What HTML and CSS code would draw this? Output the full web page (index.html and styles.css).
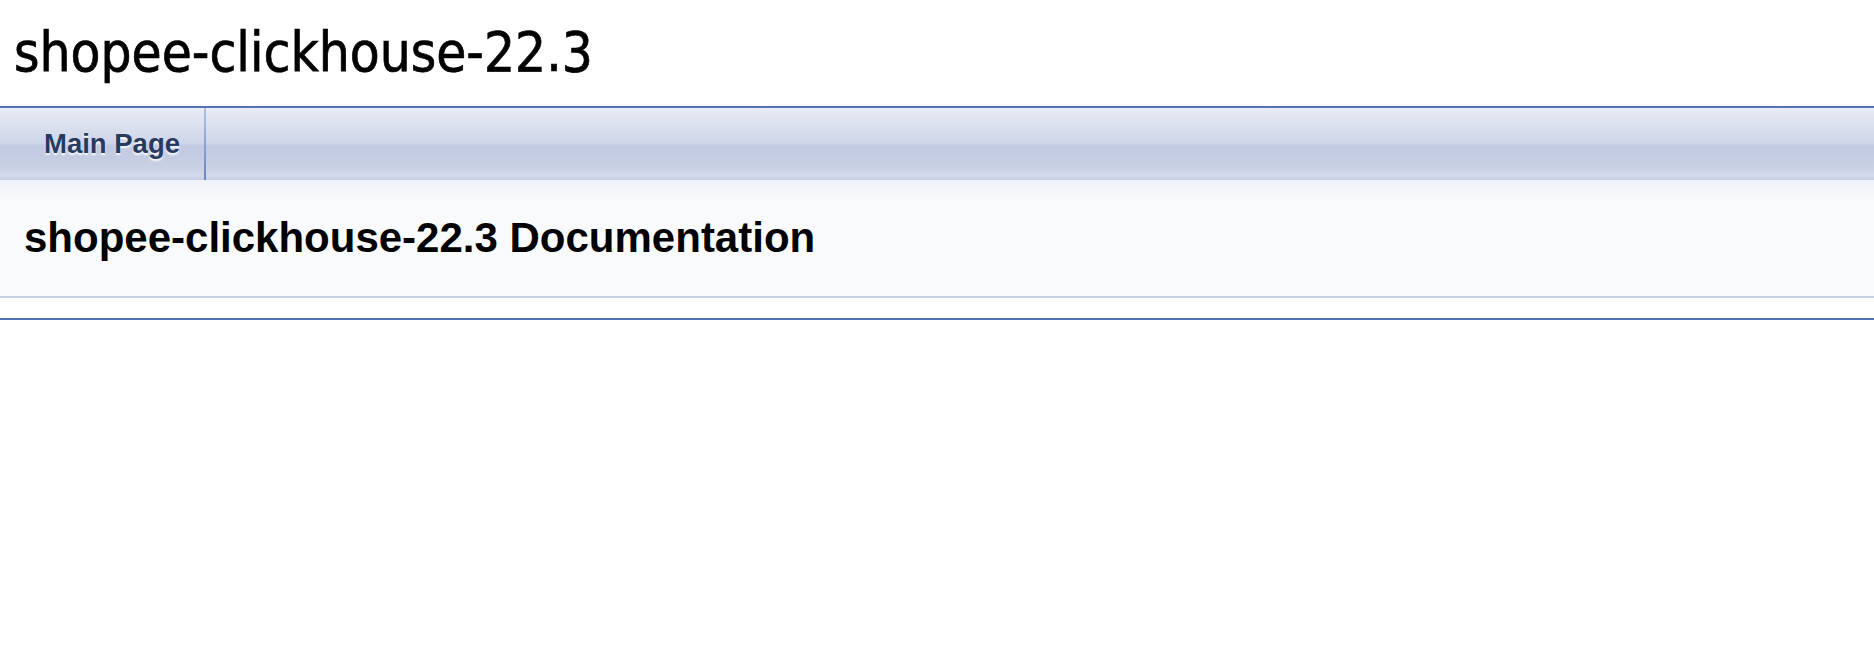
FILE: index.html
```html
<!DOCTYPE html>
<html>
<head>
<meta charset="utf-8">
<title>shopee-clickhouse-22.3: Main Page</title>
<link rel="stylesheet" href="styles.css">
</head>
<body>
<div class="titlearea">
  <div class="projectname">shopee-clickhouse-22.3</div>
</div>
<div class="navrow">
  <ul class="tablist">
    <li class="tab"><a class="tab-link" href="#">Main Page</a></li>
  </ul>
</div>
<div class="header">
  <div class="headertitle">
    <div class="title">shopee-clickhouse-22.3 Documentation</div>
  </div>
</div>
<hr class="footer">
</body>
</html>
```
FILE: styles.css
```css
html, body {
  margin: 0;
  padding: 0;
  background: #ffffff;
}

body {
  font-family: "Liberation Sans", Arial, sans-serif;
  color: #000000;
}

.titlearea {
  height: 106px;
  box-sizing: content-box;
  border-bottom: 2px solid #5373B4;
  padding: 0 0 0 14px;
}

.projectname {
  font-family: "DejaVu Sans Condensed", "DejaVu Sans", sans-serif;
  font-stretch: condensed;
  font-size: 54.4px;
  line-height: 64px;
  padding-top: 21px;
  -webkit-text-stroke: 0.7px #000000;
  color: #000000;
}

.navrow {
  height: 72px;
  background: linear-gradient(to bottom,
    #e9ecf5 0px,
    #e2e6f1 8px,
    #d3d9ea 30px,
    #cdd4e7 36px,
    #c1cae1 37px,
    #c3cce2 50px,
    #cbd2e6 62px,
    #d3d9ea 68px,
    #c6cee3 72px);
}

.tablist {
  list-style: none;
  margin: 0;
  padding: 0;
  display: flex;
  height: 72px;
}

.tab {
  display: flex;
}

.tab-link {
  display: block;
  height: 72px;
  line-height: 72px;
  padding: 0 26px 0 44px;
  font-family: "Liberation Sans", Arial, sans-serif;
  font-weight: bold;
  font-size: 27.5px;
  color: #283A5D;
  text-decoration: none;
  text-shadow: 0 2px 2px rgba(255, 255, 255, 0.9);
  background: linear-gradient(to bottom, #b4c0de 0%, #8ea2cf 50%, #6b84c0 100%) right top / 2px 100% no-repeat;
}

.header {
  background: linear-gradient(to bottom, #eef1f7 0px, #f4f6fa 10px, #f9fafc 20px) #F9FAFC;
  border-bottom: 2px solid #C4CFE5;
}

.headertitle {
  padding: 10px 10px 10px 20px;
}

.title {
  margin: 20px 4px;
  font-family: "Liberation Sans", Arial, sans-serif;
  font-weight: bold;
  font-size: 42px;
  line-height: 56px;
  color: #000000;
}

.footer {
  margin: 20px 0 0 0;
  border: none;
  border-top: 2px solid #5373B4;
  height: 0;
}
```
